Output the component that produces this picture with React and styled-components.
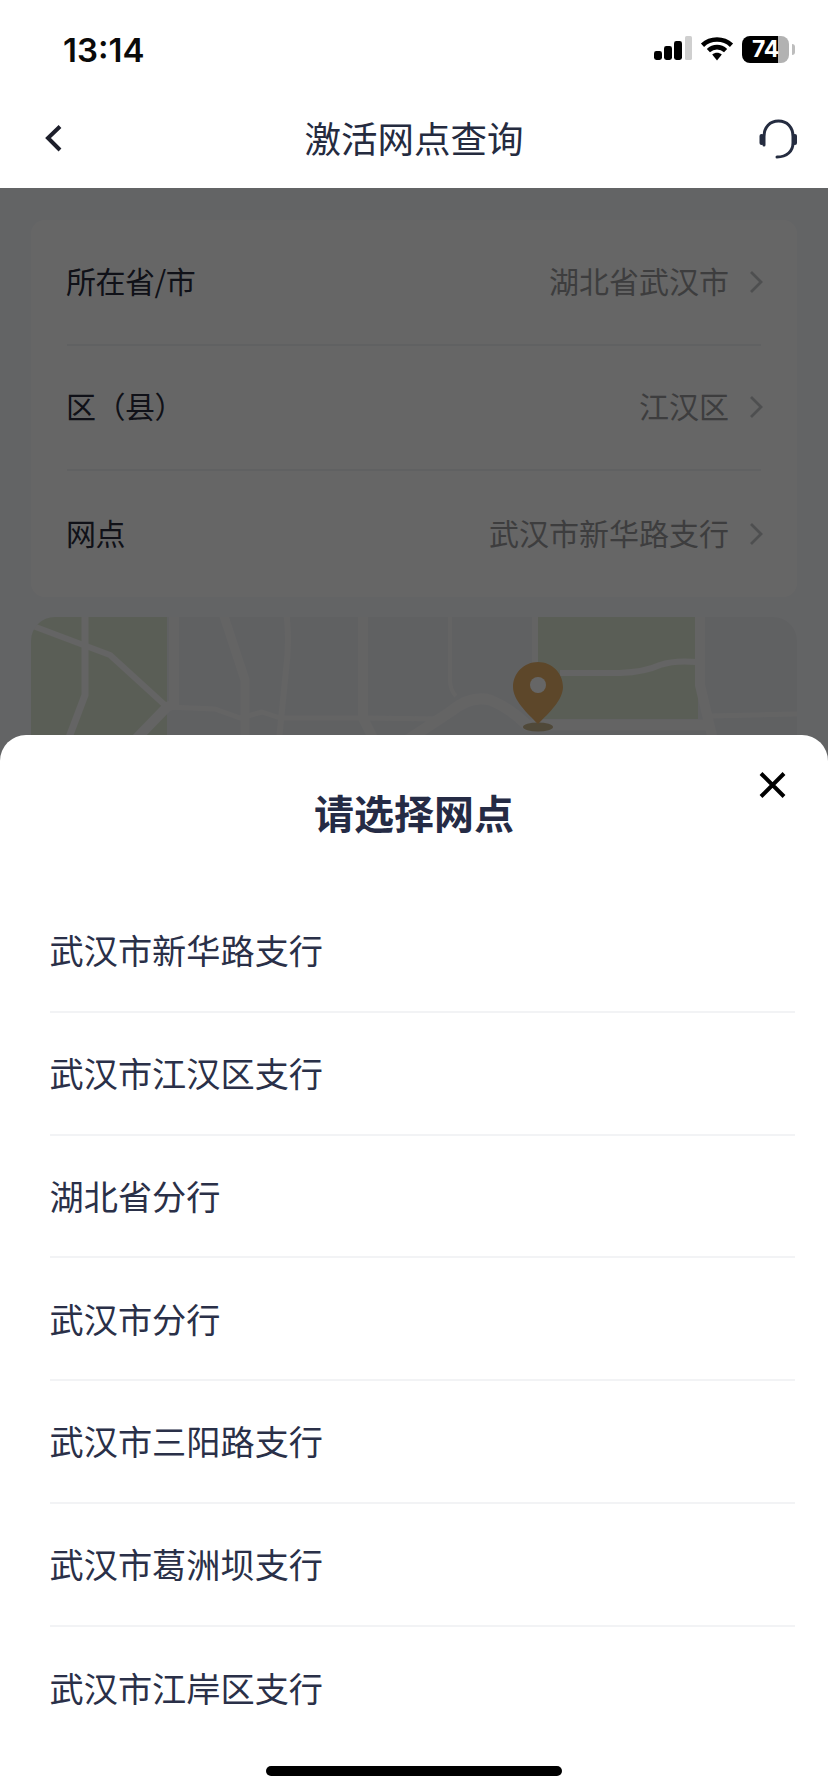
import React from "react";
import styled, { createGlobalStyle } from "styled-components";

const Global = createGlobalStyle`
  html, body { margin: 0; padding: 0; background: #fff; }
  body { font-family: "Noto Sans CJK SC", "Noto Sans", sans-serif; }
  * { box-sizing: border-box; }
`;

const Screen = styled.div`
  position: relative;
  width: 828px;
  height: 1792px;
  overflow: hidden;
  background: #fff;
  display: flex;
  flex-direction: column;
`;

const StatusBar = styled.div`
  height: 90px;
  flex: none;
  display: flex;
  justify-content: space-between;
  align-items: flex-start;
  padding: 0 39px 0 63px;
`;

const Clock = styled.div`
  margin-top: 30px;
  font-family: Inter, "Liberation Sans", sans-serif;
  font-weight: 600;
  font-size: 33px;
  line-height: 40px;
  letter-spacing: 0;
  color: #0a0a0a;
`;

const StatusIcons = styled.div`
  margin-top: 36px;
  display: flex;
  align-items: flex-start;
`;

const Battery = styled.div`
  position: relative;
  margin-left: 8px;
  margin-top: 0;
  width: 47px;
  height: 27px;
  border-radius: 8px;
  background: linear-gradient(90deg, #000 0 36px, #b2b2b2 36px 47px);
  color: #fff;
  font-family: Inter, "Liberation Sans", sans-serif;
  font-weight: 700;
  font-size: 23px;
  line-height: 27px;
  padding-left: 10px;
  letter-spacing: -0.2px;

  &::after {
    content: "";
    position: absolute;
    left: 50px;
    top: 8px;
    width: 3px;
    height: 11px;
    border-radius: 0 3px 3px 0;
    background: #bdbdbd;
  }
`;

const NavBar = styled.div`
  height: 98px;
  flex: none;
  display: grid;
  grid-template-columns: 1fr auto 1fr;
  align-items: center;
  padding: 0 45px;
`;

const NavTitle = styled.div`
  font-size: 36.5px;
  line-height: 48px;
  font-weight: 400;
  color: #252b3f;
  margin-top: -2px;
`;

const NavRight = styled.div`
  justify-self: end;
  display: flex;
  margin-right: -14px;
`;

const Content = styled.div`
  position: relative;
  flex: 1;
  min-height: 0;
  background: #f8fafd;
  padding: 32px 31px 0;
  display: flex;
  flex-direction: column;
  gap: 20px;
`;

const FormCard = styled.div`
  background: #fff;
  border-radius: 14px;
  padding: 0 36px;
`;

const FormRow = styled.div`
  height: 125.5px;
  display: flex;
  align-items: center;
  justify-content: space-between;
  padding-bottom: 4px;
  border-bottom: ${(p) => (p.$last ? "none" : "2px solid #f1f2f4")};
`;

const FormLabel = styled.div`
  font-size: 30px;
  letter-spacing: -0.5px;
  margin-left: -1px;
  color: #282c3c;
`;

const FormValue = styled.div`
  display: flex;
  align-items: center;
  gap: 20px;
  margin-right: -2px;
  font-size: 30px;
  color: #9a9a9c;
`;

const ChevronSvg = styled.svg`
  margin-top: 4px;
`;

const MapCard = styled.div`
  height: 300px;
  border-radius: 24px;
  overflow: hidden;
  background: #f0f2f6;
  flex: none;
`;

const Backdrop = styled.div`
  position: absolute;
  left: 0;
  right: 0;
  top: 0;
  bottom: 0;
  background: rgba(0, 0, 0, 0.6);
`;

const Sheet = styled.div`
  position: absolute;
  left: 0;
  right: 0;
  bottom: 0;
  top: 735px;
  background: #fff;
  border-radius: 26px 26px 0 0;
  padding: 0 33px 0 50px;
`;

const SheetHeader = styled.div`
  height: 155px;
  margin-left: -17px;
  display: grid;
  grid-template-columns: 1fr auto 1fr;
`;

const SheetTitle = styled.h2`
  grid-column: 2;
  margin: 52px 0 0;
  font-size: 40px;
  line-height: 50px;
  font-weight: 700;
  color: #252b45;
`;

const CloseButton = styled.div`
  justify-self: end;
  margin-top: 37px;
  margin-right: 9px;
  display: flex;
  align-self: start;
`;

const SiteList = styled.div`
  display: flex;
  flex-direction: column;
`;

const SiteRow = styled.div`
  height: 122.75px;
  display: flex;
  align-items: center;
  font-size: 34.2px;
  margin-left: -0.5px;
  color: #2a3048;
  border-bottom: ${(p) => (p.$last ? "none" : "2px solid #f2f3f5")};
  padding-bottom: 2px;
`;

const HomeBar = styled.div`
  position: absolute;
  left: 266px;
  top: 1766px;
  width: 296px;
  height: 10px;
  border-radius: 5px;
  background: #000;
`;

const Signal = () => (
  <svg width="38" height="24" viewBox="0 0 38 24">
    <rect x="0" y="15" width="8" height="9" rx="2.4" fill="#000" />
    <rect x="10" y="10" width="8" height="14" rx="2.4" fill="#000" />
    <rect x="20" y="5" width="8" height="19" rx="2.4" fill="#000" />
    <rect x="31" y="0" width="7" height="24" rx="1.6" fill="#cfcfcf" />
  </svg>
);

const Wifi = () => (
  <svg width="34" height="26" viewBox="0 0 34 26" style={{ marginLeft: 8 }}>
    <path d="M2.5 9.2C10.6 1.6 23.4 1.6 31.5 9.2" fill="none" stroke="#000" strokeWidth="4.6" />
    <path d="M8.4 14.6C13.4 10 20.6 10 25.6 14.6" fill="none" stroke="#000" strokeWidth="4.6" />
    <path d="M12.2 18.6C15 16.2 19 16.2 21.8 18.6L17 24.6Z" fill="#000" />
  </svg>
);

const BackIcon = () => (
  <svg width="18" height="30" viewBox="0 0 18 30">
    <polyline points="15,2.5 3,14 15,26" fill="none" stroke="#1d1f2b" strokeWidth="4" />
  </svg>
);

const HeadsetIcon = () => (
  <svg width="38" height="40" viewBox="0 0 38 40">
    <path d="M5 26V17.5C5 8 11 2 19.5 2C28 2 34 8 34 17.5V24C34 32 28 38 18 38" fill="none" stroke="#252c40" strokeWidth="3" strokeLinecap="round" />
    <rect x="0.5" y="15" width="4.5" height="11" rx="2" fill="#252c40" />
    <rect x="33.5" y="15" width="4.5" height="11" rx="2" fill="#252c40" />
  </svg>
);

const Chevron = () => (
  <ChevronSvg width="14" height="22" viewBox="0 0 14 22">
    <polyline points="2,1 12,11 2,21" fill="none" stroke="#c4c5c9" strokeWidth="2.8" />
  </ChevronSvg>
);

const CloseIcon = () => (
  <svg width="27" height="26" viewBox="0 0 27 26">
    <path d="M2 1.5L25 24.5M25 1.5L2 24.5" stroke="#000" strokeWidth="4" />
  </svg>
);

const MapSvg = styled.svg`
  display: block;
  filter: blur(0.7px);
`;

const MapDrawing = () => (
  <MapSvg width="766" height="300" viewBox="31 617 766 300">
    <rect x="31" y="617" width="136" height="130" fill="#e2ecd8" />
    <rect x="538" y="617" width="160" height="102" fill="#e2ecd8" />
    <g fill="none" stroke="#fafafa" strokeLinejoin="round">
      <path d="M33 626L110 655L167 707" strokeWidth="6" />
      <path d="M85 610V695L68 740" strokeWidth="7" />
      <path d="M174 610V704L167 707L135 740" strokeWidth="10" />
      <path d="M222 610L245 680V740" strokeWidth="9" />
      <path d="M286 610Q290 640 286 670L279 740" strokeWidth="6" />
      <path d="M363 610V718L374 740" strokeWidth="10" />
      <path d="M167 707L215 709L240 718L262 712L280 718H363L440 719" strokeWidth="5" />
      <path d="M450 610V680Q450 690 456 696" strokeWidth="4" />
      <path d="M535 610V668" strokeWidth="6" />
      <path d="M400 745L450 712Q470 695 490 700Q510 708 527 725H710" strokeWidth="11" />
      <path d="M700 610V685L713 740" strokeWidth="10" />
      <path d="M710 716L797 714" strokeWidth="5" />
      <path d="M560 673H620Q645 672 660 665Q675 660 696 662" strokeWidth="6" />
    </g>
    <ellipse cx="538" cy="727" rx="15" ry="4.5" fill="#c9b790" />
    <path d="M538 662C524 662 513 673 513 687C513 700 527 713 538 724C549 713 563 700 563 687C563 673 552 662 538 662Z" fill="#e8b26a" />
    <circle cx="538" cy="685" r="8" fill="#fff" />
  </MapSvg>
);

const formRows = [
  ["所在省/市", "湖北省武汉市"],
  ["区（县）", "江汉区"],
  ["网点", "武汉市新华路支行"],
];

const sites = [
  "武汉市新华路支行",
  "武汉市江汉区支行",
  "湖北省分行",
  "武汉市分行",
  "武汉市三阳路支行",
  "武汉市葛洲坝支行",
  "武汉市江岸区支行",
];

export default function App() {
  return (
    <Screen>
      <Global />
      <StatusBar>
        <Clock>13:14</Clock>
        <StatusIcons>
          <Signal />
          <Wifi />
          <Battery>74</Battery>
        </StatusIcons>
      </StatusBar>
      <NavBar>
        <BackIcon />
        <NavTitle>激活网点查询</NavTitle>
        <NavRight>
          <HeadsetIcon />
        </NavRight>
      </NavBar>
      <Content>
        <FormCard>
          {formRows.map(([label, value], i) => (
            <FormRow key={label} $last={i === formRows.length - 1}>
              <FormLabel>{label}</FormLabel>
              <FormValue>
                {value}
                <Chevron />
              </FormValue>
            </FormRow>
          ))}
        </FormCard>
        <MapCard>
          <MapDrawing />
        </MapCard>
        <Backdrop />
      </Content>
      <Sheet>
        <SheetHeader>
          <SheetTitle>请选择网点</SheetTitle>
          <CloseButton>
            <CloseIcon />
          </CloseButton>
        </SheetHeader>
        <SiteList>
          {sites.map((s, i) => (
            <SiteRow key={s} $last={i === sites.length - 1}>
              {s}
            </SiteRow>
          ))}
        </SiteList>
      </Sheet>
      <HomeBar />
    </Screen>
  );
}
